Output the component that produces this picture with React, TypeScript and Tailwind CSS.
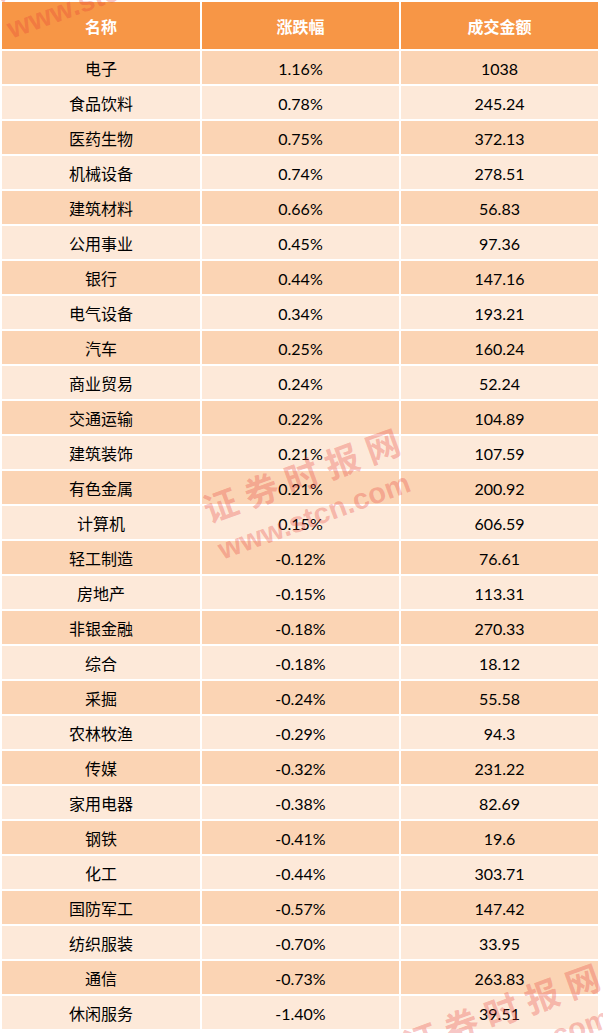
import React from 'react';

const rows: [string, string, string][] = [
  ['电子', '1.16%', '1038'],
  ['食品饮料', '0.78%', '245.24'],
  ['医药生物', '0.75%', '372.13'],
  ['机械设备', '0.74%', '278.51'],
  ['建筑材料', '0.66%', '56.83'],
  ['公用事业', '0.45%', '97.36'],
  ['银行', '0.44%', '147.16'],
  ['电气设备', '0.34%', '193.21'],
  ['汽车', '0.25%', '160.24'],
  ['商业贸易', '0.24%', '52.24'],
  ['交通运输', '0.22%', '104.89'],
  ['建筑装饰', '0.21%', '107.59'],
  ['有色金属', '0.21%', '200.92'],
  ['计算机', '0.15%', '606.59'],
  ['轻工制造', '-0.12%', '76.61'],
  ['房地产', '-0.15%', '113.31'],
  ['非银金融', '-0.18%', '270.33'],
  ['综合', '-0.18%', '18.12'],
  ['采掘', '-0.24%', '55.58'],
  ['农林牧渔', '-0.29%', '94.3'],
  ['传媒', '-0.32%', '231.22'],
  ['家用电器', '-0.38%', '82.69'],
  ['钢铁', '-0.41%', '19.6'],
  ['化工', '-0.44%', '303.71'],
  ['国防军工', '-0.57%', '147.42'],
  ['纺织服装', '-0.70%', '33.95'],
  ['通信', '-0.73%', '263.83'],
  ['休闲服务', '-1.40%', '39.51'],
];

// faint rotated site stamp laid over the table
const Watermark: React.FC<{ className: string }> = ({ className }) => (
  <div
    className={`absolute pointer-events-none select-none -rotate-[20deg] text-[#e53935]/30 leading-none whitespace-nowrap ${className}`}
  >
    <div className="text-[34px] font-bold tracking-[9px] font-['Noto_Sans_CJK_SC',serif]">证券时报网</div>
    <div className="mt-[12px] text-[29px] font-bold font-['Liberation_Sans',sans-serif]">www.stcn.com</div>
  </div>
);

export default function App() {
  return (
    <div className="relative w-[603px] h-[1033px] overflow-hidden bg-white font-['Lato','Noto_Sans_CJK_SC',sans-serif]">
      <table className="w-[600px] border-separate border-spacing-[2px] text-[16px] text-black">
        <thead>
          <tr className="h-[47px] bg-[#f79646] text-white">
            <th className="w-[198px] pt-[2px] font-bold">名称</th>
            <th className="w-[197px] pt-[2px] font-bold">涨跌幅</th>
            <th className="pt-[2px] font-bold">成交金额</th>
          </tr>
        </thead>
        <tbody>
          {rows.map(([name, pct, amount], i) => (
            <tr key={name} className={`h-[33px] ${i % 2 === 0 ? 'bg-[#fbd4b4]' : 'bg-[#fde9d9]'}`}>
              <td className="text-center px-0 pt-[3px] pb-0">{name}</td>
              <td className="text-center px-0 pt-[3px] pb-0">{pct}</td>
              <td className="text-center px-0 pt-[3px] pb-0">{amount}</td>
            </tr>
          ))}
        </tbody>
      </table>

      <Watermark className="left-[-6px] top-[-66px]" />
      <Watermark className="left-[205px] top-[455px]" />
      <Watermark className="left-[405px] top-[990px]" />
    </div>
  );
}
